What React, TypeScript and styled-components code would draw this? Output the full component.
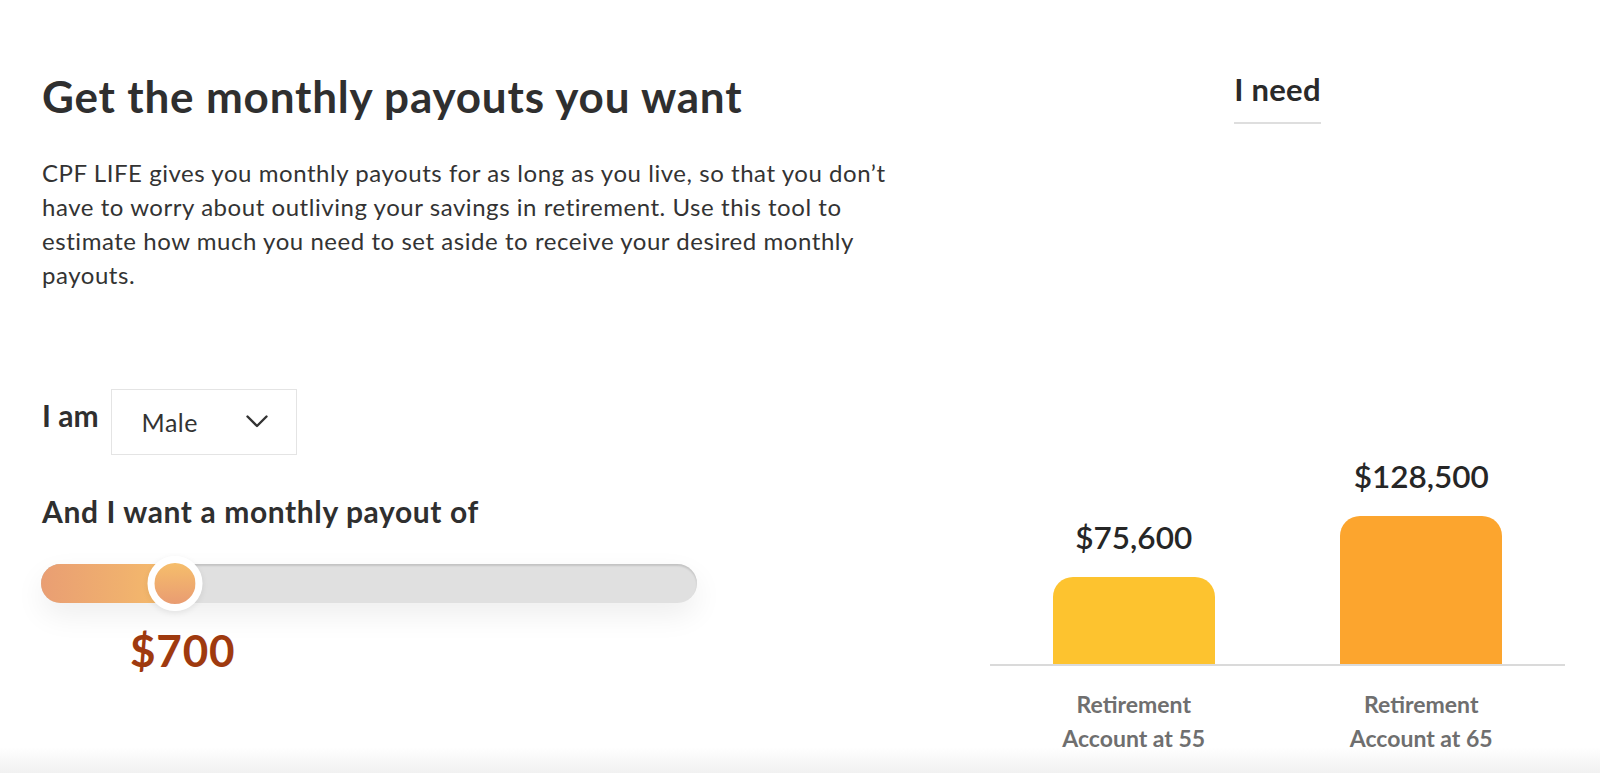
import React from "react";
import styled, { createGlobalStyle } from "styled-components";

const GlobalStyle = createGlobalStyle`
  html, body {
    margin: 0;
    padding: 0;
  }
  body {
    font-family: "Lato", "Noto Sans", sans-serif;
    color: #333;
    min-height: 100vh;
    background: linear-gradient(to bottom, #ffffff 0, #ffffff calc(100% - 26px), #f1f1f1 100%);
  }
`;

const Page = styled.div`
  display: grid;
  grid-template-columns: 948px 575px;
  padding: 70px 35px 0 42px;
  min-height: 773px;
  box-sizing: border-box;
`;

const LeftColumn = styled.section`
  display: flex;
  flex-direction: column;
  align-items: flex-start;
`;

const Title = styled.h1`
  margin: 0;
  font-size: 44px;
  line-height: 1.2;
  font-weight: 700;
  letter-spacing: 0.82px;
  color: #2f2f2f;
`;

const Intro = styled.p`
  margin: 33px 0 0;
  width: 860px;
  font-size: 24px;
  line-height: 34px;
  font-weight: 400;
  letter-spacing: 0.55px;
  color: #333;
`;

const GenderRow = styled.div`
  display: flex;
  align-items: flex-start;
  gap: 12px;
  margin-top: 97px;
`;

const FieldLabel = styled.span`
  margin-top: 8px;
  font-size: 30px;
  line-height: 1.2;
  font-weight: 700;
  color: #2f2f2f;
`;

const Select = styled.div`
  display: flex;
  align-items: center;
  justify-content: space-between;
  width: 186px;
  height: 66px;
  box-sizing: border-box;
  padding: 0 28px 0 30px;
  border: 1px solid #e4e4e4;
  background: #fff;
  font-size: 25px;
  line-height: 1.2;
  letter-spacing: 0.5px;
  color: #333;
`;

const PayoutLabel = styled.h2`
  margin: 38px 0 0;
  font-size: 30px;
  line-height: 1.2;
  font-weight: 700;
  letter-spacing: 0.6px;
  color: #2f2f2f;
`;

const Slider = styled.div`
  position: relative;
  display: flex;
  align-items: center;
  width: 656px;
  height: 55px;
  margin-top: 27px;
  margin-left: -1px;
`;

const Track = styled.div`
  position: relative;
  width: 100%;
  height: 39px;
  border-radius: 20px;
  background: #e0e0e0;
  overflow: hidden;
  box-shadow: inset 0 2px 2px rgba(0, 0, 0, 0.13), 0 12px 30px rgba(0, 0, 0, 0.07);
`;

const Fill = styled.div`
  height: 100%;
  background: linear-gradient(to right, #e99e73 0%, #f0b06e 60%, #f6bd6b 100%);
`;

const Thumb = styled.div`
  position: absolute;
  top: 0;
  width: 55px;
  height: 55px;
  box-sizing: border-box;
  border-radius: 50%;
  border: 7px solid #fff;
  transform: translateX(-50%);
  background: linear-gradient(to bottom, #f6be6b 0%, #e99c72 100%);
  box-shadow: 0 2px 6px rgba(0, 0, 0, 0.08);
`;

const PayoutValue = styled.div`
  margin: 13px 0 0 88px;
  font-size: 44px;
  line-height: 1.2;
  font-weight: 700;
  letter-spacing: 0.8px;
  color: #9f3a0f;
`;

const RightColumn = styled.section`
  display: flex;
  flex-direction: column;
  align-items: center;
`;

const NeedHeading = styled.h2`
  margin: 1px 0 0;
  padding: 0 0 14px;
  border-bottom: 2px solid #dedede;
  font-size: 31px;
  line-height: 1.2;
  font-weight: 700;
  letter-spacing: 0.3px;
  color: #2a2a2a;
`;

const Chart = styled.div`
  display: grid;
  grid-template-columns: 1fr 1fr;
  align-items: end;
  width: 100%;
  height: 542px;
  box-sizing: border-box;
  border-bottom: 2px solid #dadada;
`;

const BarColumn = styled.div`
  display: flex;
  flex-direction: column;
  align-items: center;
`;

const BarValue = styled.div`
  margin-bottom: 20px;
  font-size: 31.5px;
  line-height: 1.2;
  font-weight: 600;
  color: #262626;
`;

const Bar = styled.div<{ $color: string }>`
  width: 162px;
  border-radius: 20px 20px 0 0;
  background: ${(p) => p.$color};
`;

const Labels = styled.div`
  display: grid;
  grid-template-columns: 1fr 1fr;
  width: 100%;
  margin-top: 21px;
`;

const BarLabel = styled.div`
  text-align: center;
  font-size: 23px;
  line-height: 34px;
  font-weight: 700;
  color: #6f6f6f;
`;

const Chevron = () => (
  <svg width="22" height="13" viewBox="0 0 22 13" fill="none">
    <polyline points="1.5,1.5 11,11 20.5,1.5" stroke="#333" strokeWidth="2.4" strokeLinecap="round" strokeLinejoin="round" />
  </svg>
);

const bars = [
  { value: 75600, color: "#fdc32f", label: ["Retirement", "Account at 55"] },
  { value: 128500, color: "#fca52e", label: ["Retirement", "Account at 65"] },
];

const maxValue = 128500;
const maxBarHeight = 148;

const payout = 700;
const payoutMax = 3420;

const fmt = (n: number) => "$" + n.toLocaleString("en-US");

export default function App() {
  const pct = (payout / payoutMax) * 100;
  return (
    <>
      <GlobalStyle />
      <Page>
        <LeftColumn>
          <Title>Get the monthly payouts you want</Title>
          <Intro>
            CPF LIFE gives you monthly payouts for as long as you live, so that you don’t have to worry about
            outliving your savings in retirement. Use this tool to estimate how much you need to set aside to receive
            your desired monthly payouts.
          </Intro>
          <GenderRow>
            <FieldLabel>I am</FieldLabel>
            <Select>
              <span>Male</span>
              <Chevron />
            </Select>
          </GenderRow>
          <PayoutLabel>And I want a monthly payout of</PayoutLabel>
          <Slider>
            <Track>
              <Fill style={{ width: `${pct}%` }} />
            </Track>
            <Thumb style={{ left: `${pct}%` }} />
          </Slider>
          <PayoutValue>{fmt(payout)}</PayoutValue>
        </LeftColumn>
        <RightColumn>
          <NeedHeading>I need</NeedHeading>
          <Chart>
            {bars.map((b) => (
              <BarColumn key={b.value}>
                <BarValue>{fmt(b.value)}</BarValue>
                <Bar $color={b.color} style={{ height: `${(b.value / maxValue) * maxBarHeight}px` }} />
              </BarColumn>
            ))}
          </Chart>
          <Labels>
            {bars.map((b) => (
              <BarLabel key={b.value}>
                {b.label[0]}
                <br />
                {b.label[1]}
              </BarLabel>
            ))}
          </Labels>
        </RightColumn>
      </Page>
    </>
  );
}
